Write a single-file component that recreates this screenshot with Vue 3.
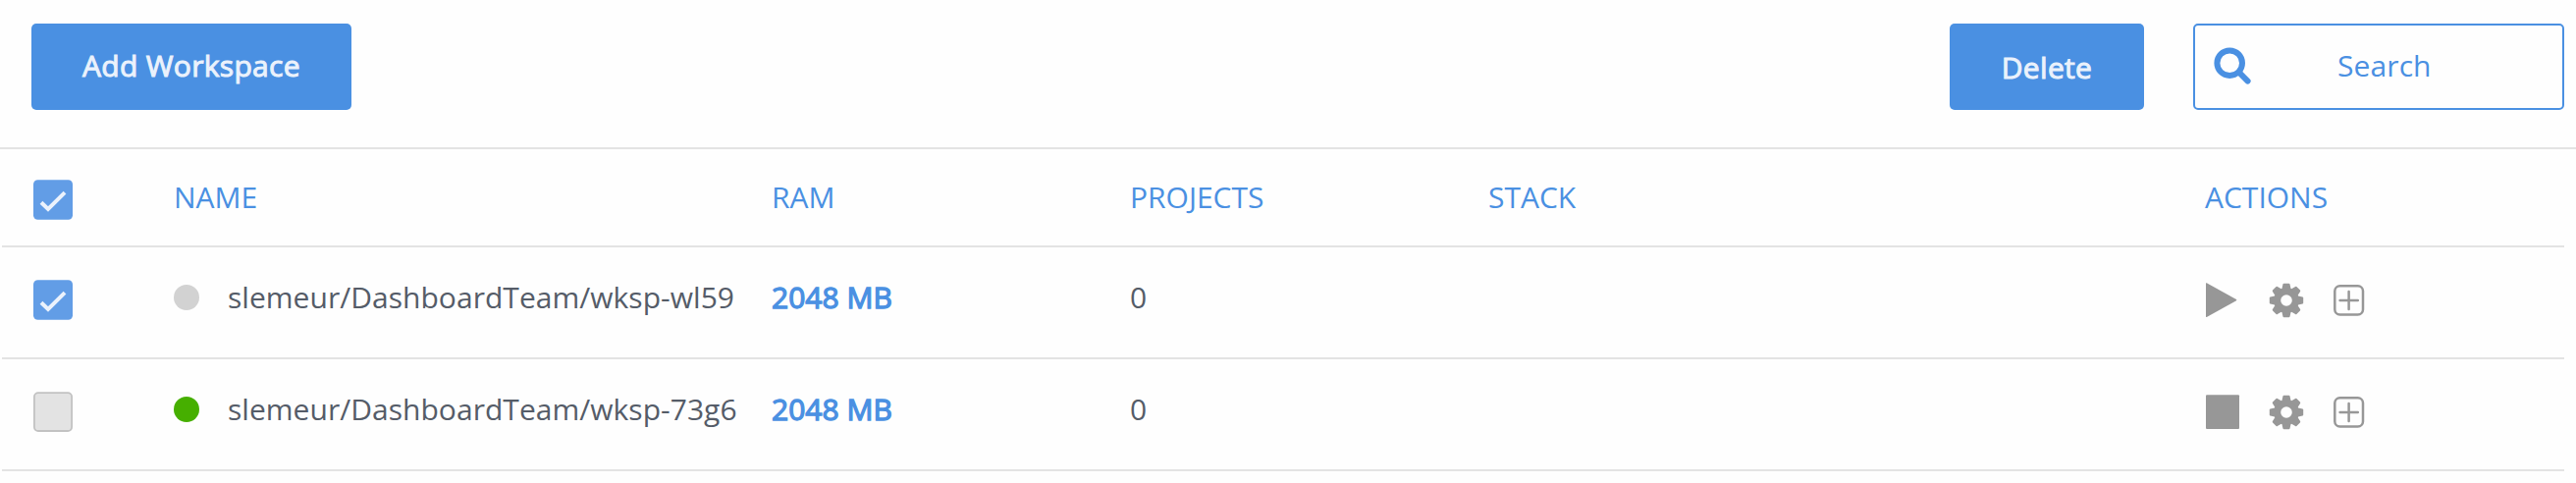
<script setup>
import { ref } from 'vue'

const allChecked = ref(true)
const workspaces = ref([
  { name: 'slemeur/DashboardTeam/wksp-wl59', ram: '2048 MB', projects: 0, stack: '', running: false, checked: true },
  { name: 'slemeur/DashboardTeam/wksp-73g6', ram: '2048 MB', projects: 0, stack: '', running: true, checked: false },
])
const teeth = [0, 45, 90, 135, 180, 225, 270, 315]
</script>

<template>
  <main class="page">
    <header class="toolbar">
      <button class="btn add">Add Workspace</button>
      <button class="btn delete">Delete</button>
      <div class="search">
        <svg class="glass" width="40" height="40" viewBox="0 0 40 40">
          <circle cx="16.2" cy="16.2" r="12.8" />
          <path d="M25.7 25.7 L34.6 34.6" />
        </svg>
        <span class="search-label">Search</span>
      </div>
    </header>

    <section class="table">
      <div class="row head">
        <div class="cell pick">
          <svg class="check" width="40" height="41" viewBox="0 0 40 41" @click="allChecked = !allChecked">
            <rect class="on" x="0" y="0.2" width="40" height="40.6" rx="4.5" />
            <path v-if="allChecked" class="tick" d="M8 23.2 L15 30 L32 13.2" />
          </svg>
        </div>
        <div class="cell">NAME</div>
        <div class="cell">RAM</div>
        <div class="cell">PROJECTS</div>
        <div class="cell">STACK</div>
        <div class="cell">ACTIONS</div>
      </div>

      <div v-for="w in workspaces" :key="w.name" class="row body">
        <div class="cell pick">
          <svg class="check" width="40" height="41" viewBox="0 0 40 41" @click="w.checked = !w.checked">
            <template v-if="w.checked">
              <rect class="on" x="0" y="0.2" width="40" height="40.6" rx="4.5" />
              <path class="tick" d="M8 23.2 L15 30 L32 13.2" />
            </template>
            <rect v-else class="off" x="0.9" y="1.1" width="38.2" height="38.9" rx="4" />
          </svg>
        </div>
        <div class="cell name">
          <i class="dot" :class="{ running: w.running }"></i>
          <span>{{ w.name }}</span>
        </div>
        <div class="cell ram">{{ w.ram }}</div>
        <div class="cell">{{ w.projects }}</div>
        <div class="cell">{{ w.stack }}</div>
        <div class="cell actions">
          <svg width="35" height="36" viewBox="0 0 35 36">
            <rect v-if="w.running" x="0" y="0.3" width="34" height="34.6" rx="1" />
            <path v-else d="M0 0.6 Q0 0 0.8 0.3 L31 17 Q31.8 17.6 31 18.2 L0.8 34.9 Q0 35.2 0 34.6 Z" />
          </svg>
          <svg class="gear" width="36" height="36" viewBox="-18 -18 36 36">
            <circle class="ring" r="9.3" />
            <path v-for="a in teeth" :key="a" :transform="`rotate(${a})`" d="M-4.8 -11 L-3.5 -16.4 Q-3.3 -17.2 -2.5 -17.2 L2.5 -17.2 Q3.3 -17.2 3.5 -16.4 L4.8 -11 Z" />
          </svg>
          <svg class="plus" width="32" height="32" viewBox="0 0 32 32">
            <rect x="1.3" y="1.3" width="28.7" height="29.2" rx="5.2" />
            <path d="M6.6 15.9 H24.8 M15.6 6.9 V24.9" />
          </svg>
        </div>
      </div>
    </section>
  </main>
</template>

<style>
body {
  background: #fefefe;
}
</style>

<style scoped>
.page {
  width: 2624px;
  height: 492px;
  overflow: hidden;
  background: #fefefe;
  color: #555c68;
  font-family: "Open Sans", sans-serif;
  font-size: 30px;
  line-height: 40px;
}
.toolbar {
  box-sizing: border-box;
  height: 152px;
  padding: 24px 12px 0 32px;
  display: flex;
  align-items: flex-start;
  border-bottom: 2px solid #e3e3e3;
}
.btn {
  box-sizing: border-box;
  height: 88px;
  padding: 0;
  border: 0;
  border-radius: 5px;
  background: #4a90e2;
  color: #ebf2fc;
  font: inherit;
  letter-spacing: 0.32px;
  -webkit-text-stroke: 1px #ebf2fc;
}
.add {
  width: 326px;
  padding-bottom: 3px;
}
.delete {
  width: 198px;
  margin-left: auto;
  padding-top: 2px;
}
.search {
  box-sizing: border-box;
  width: 378px;
  height: 88px;
  margin-left: 50px;
  padding-left: 19px;
  display: flex;
  border: 2px solid #4a90e2;
  border-radius: 5px;
  color: #4a90e2;
}
.glass {
  margin-top: 22px;
  fill: none;
  stroke: #4a90e2;
  stroke-width: 6;
  stroke-linecap: round;
}
.search-label {
  margin: 21px 0 0 86px;
  letter-spacing: 0.1px;
}
.table {
  margin: 0 12px 0 2px;
}
.row {
  box-sizing: border-box;
  display: grid;
  grid-template-columns: 143px 609px 365px 365px 730px 1fr;
  padding-left: 32px;
  border-bottom: 2px solid #e3e3e3;
}
.head {
  height: 100px;
  padding-top: 29px;
  color: #4a90e2;
}
.body {
  height: 114px;
  padding-top: 31px;
}
.check {
  display: block;
  margin-top: 2px;
}
.on {
  fill: #629de6;
}
.off {
  fill: #e3e3e3;
  stroke: #c2c2c2;
  stroke-width: 1.8;
}
.tick {
  fill: none;
  stroke: #ebf2fc;
  stroke-width: 4;
}
.name {
  display: flex;
  white-space: nowrap;
  letter-spacing: 0.03px;
}
.dot {
  width: 26px;
  height: 26px;
  margin: 7px 29px 0 0;
  border-radius: 50%;
  background: #d2d2d2;
}
.dot.running {
  background: #46af00;
}
.ram {
  color: #4a90e2;
  -webkit-text-stroke: 1.3px #4a90e2;
}
.actions {
  display: flex;
  align-items: flex-start;
  padding: 5px 0 0 1px;
  fill: #979797;
}
.gear {
  margin-left: 29px;
}
.ring {
  fill: none;
  stroke: #979797;
  stroke-width: 7;
}
.plus {
  margin: 2px 0 0 30px;
  fill: none;
  stroke: #979797;
  stroke-width: 2.5;
  stroke-linecap: round;
}
</style>
